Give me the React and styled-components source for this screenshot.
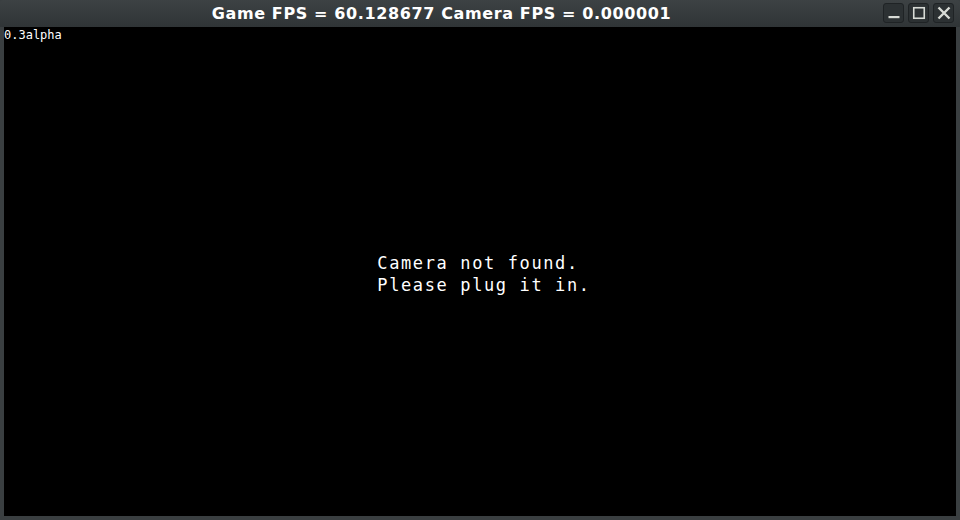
import React from "react";
import styled, { createGlobalStyle } from "styled-components";

const Global = createGlobalStyle`
  html, body { margin: 0; padding: 0; background: #2e3335; }
  body { width: 960px; height: 520px; overflow: hidden; }
`;

const Window = styled.div`
  width: 960px;
  height: 520px;
  display: flex;
  flex-direction: column;
  background: #3a3f41;
  box-sizing: border-box;
`;

const TitleBar = styled.div`
  height: 27px;
  display: flex;
  align-items: center;
  background: linear-gradient(#3d4244, #2f3436);
  border-radius: 4px 4px 0 0;
  padding-right: 6px;
  box-sizing: border-box;
`;

const Title = styled.div`
  flex: 1;
  text-align: center;
  color: #ffffff;
  font-family: "DejaVu Sans", sans-serif;
  font-weight: bold;
  font-size: 16px;
  letter-spacing: 0.62px;
  line-height: 27px;
  white-space: nowrap;
`;

const Buttons = styled.div`
  display: flex;
  gap: 4px;
  padding-bottom: 1px;
`;

const WinButton = styled.div`
  width: 21px;
  height: 20px;
  box-sizing: border-box;
  border: 1px solid #1f2325;
  border-radius: 3px;
  background: #2c3133;
  display: flex;
  align-items: center;
  justify-content: center;
  color: #d8dbd6;
`;

const Body = styled.div`
  flex: 1;
  display: flex;
  padding: 0 4px 4px 4px;
  min-height: 0;
`;

const Canvas = styled.div`
  flex: 1;
  background: #000;
  display: flex;
  flex-direction: column;
`;

const Version = styled.div`
  font-family: "DejaVu Sans Mono", monospace;
  font-size: 12px;
  line-height: 14px;
  color: #ffffff;
  padding: 1px 0 0 0;
`;

const Center = styled.div`
  flex: 1;
  display: flex;
  align-items: center;
  justify-content: center;
  padding: 0 0 10px 8px;
`;

const Message = styled.div`
  font-family: "DejaVu Sans Mono", monospace;
  font-size: 17px;
  letter-spacing: 1.62px;
  line-height: 22px;
  color: #ffffff;
  white-space: pre;
`;

export default function App() {
  return (
    <>
      <Global />
      <Window>
        <TitleBar>
          <Title>Game FPS = 60.128677 Camera FPS = 0.000001</Title>
          <Buttons>
            <WinButton>
              <svg width="14" height="14" viewBox="0 0 14 14">
                <rect x="1.5" y="10" width="11" height="2.2" fill="currentColor" />
              </svg>
            </WinButton>
            <WinButton>
              <svg width="14" height="14" viewBox="0 0 14 14">
                <rect x="1.75" y="1.75" width="10.5" height="10.5" fill="none" stroke="currentColor" strokeWidth="1.6" />
              </svg>
            </WinButton>
            <WinButton>
              <svg width="14" height="14" viewBox="0 0 14 14">
                <path d="M1.5 1.5 L12.5 12.5 M12.5 1.5 L1.5 12.5" stroke="currentColor" strokeWidth="2.4" />
              </svg>
            </WinButton>
          </Buttons>
        </TitleBar>
        <Body>
          <Canvas>
            <Version>0.3alpha</Version>
            <Center>
              <Message>{"Camera not found.\nPlease plug it in."}</Message>
            </Center>
          </Canvas>
        </Body>
      </Window>
    </>
  );
}
